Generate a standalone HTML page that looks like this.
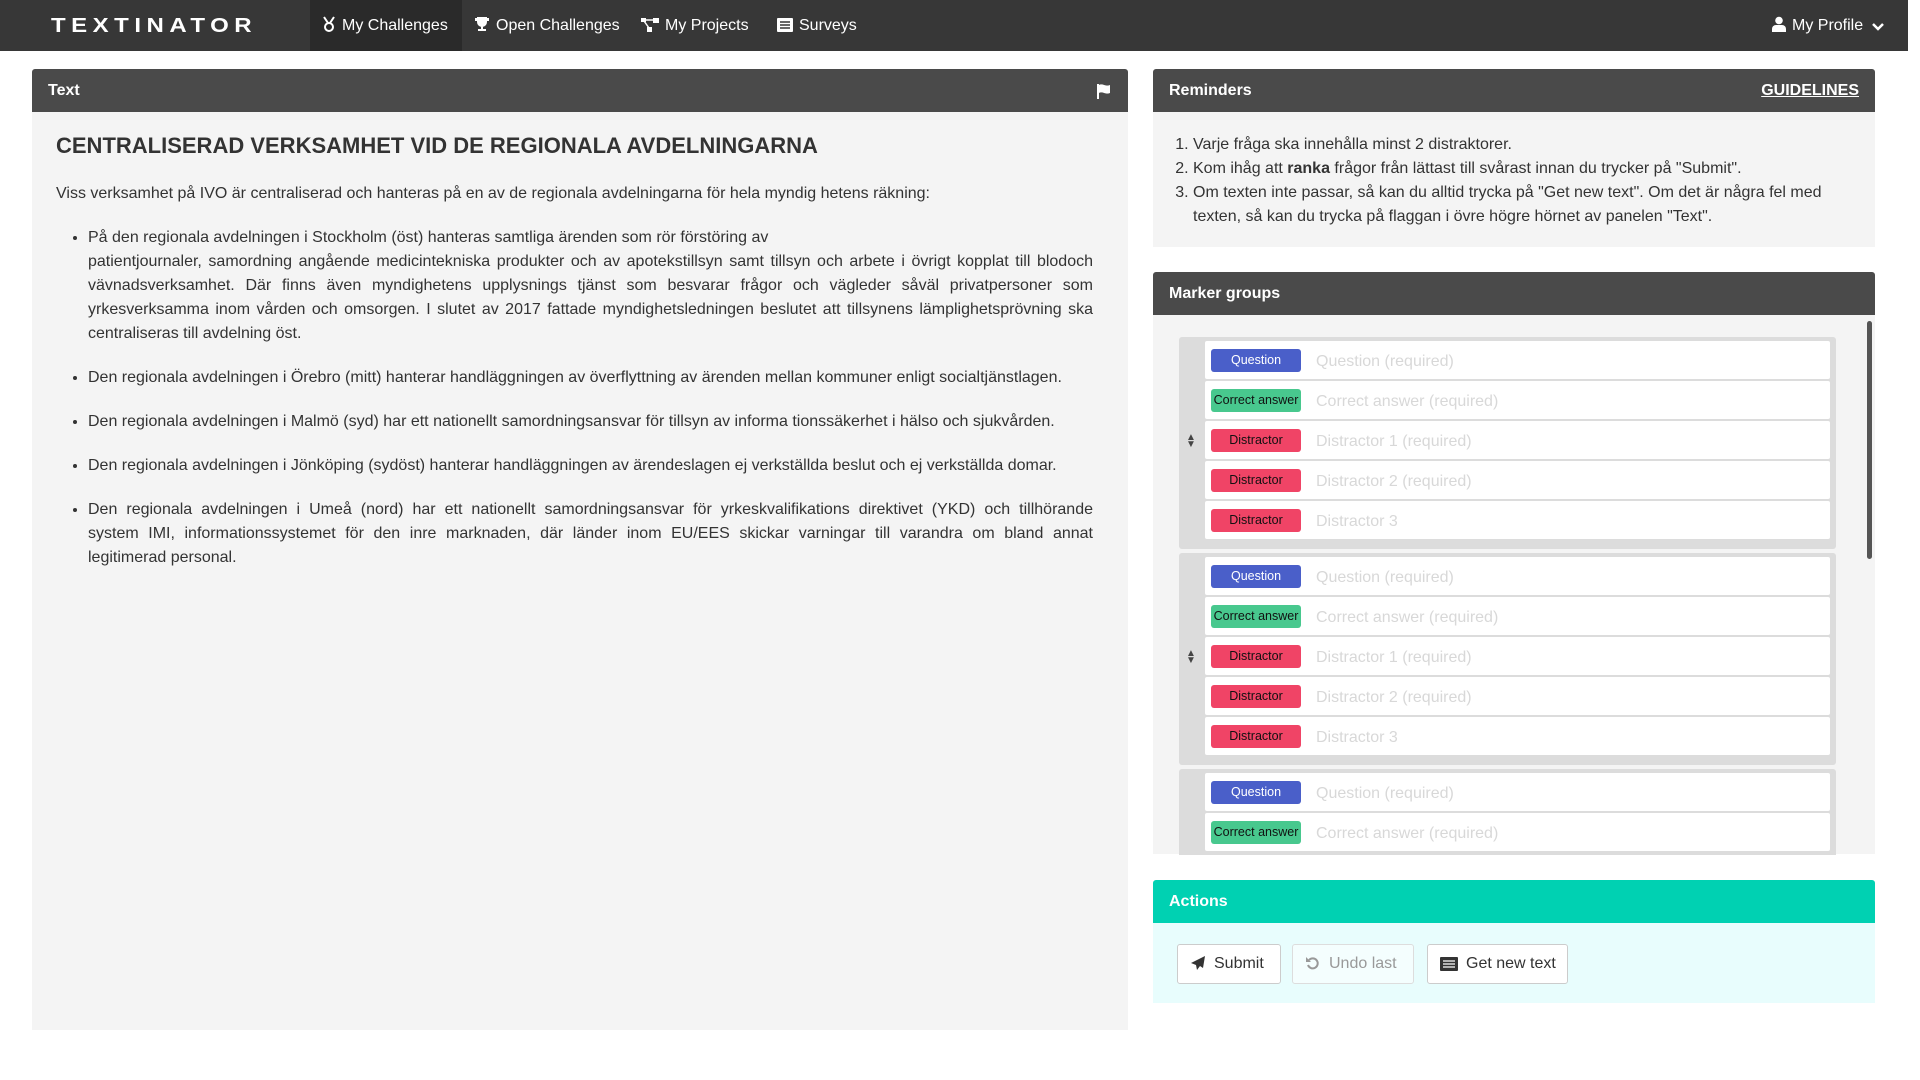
<!DOCTYPE html>
<html><head><meta charset="utf-8">
<style>
*{box-sizing:border-box;margin:0;padding:0}
body{width:1920px;height:1080px;background:#fff;font-family:"Liberation Sans",sans-serif;color:#333;position:relative;overflow:hidden}
.nav{position:absolute;left:0;top:0;width:1908px;height:51px;background:#373737;color:#fff}
.logo{position:absolute;left:51px;top:12px;font-size:24px;font-weight:bold;letter-spacing:5.5px;color:#fff;transform:scaleY(0.85)}
.ni{position:absolute;top:0;height:51px;line-height:52px;font-size:16px;color:#fff;padding:0 12px}
.ni svg{vertical-align:-2px;margin-right:6px}
.panel{position:absolute}
.ph{height:43px;background:#4a4a4a;color:#fff;font-weight:bold;font-size:16px;line-height:44px;padding:0 16px;border-radius:3px 3px 0 0;position:relative}
.pb{background:#f4f4f4}
h1{font-size:22px;font-weight:bold;color:#333;margin:0}
.txt{font-size:16px;line-height:24px;color:#333}
ul{margin:0;padding-left:32px}
li{text-align:justify;margin-bottom:20px}
.jl{display:block;text-align:justify;text-align-last:justify}
ol{padding-left:40px;font-size:16px;line-height:24px;color:#333}
.grp{position:absolute;left:1179px;width:657px;background:#dcdcdc;border-radius:3px;padding:4px 6px 4px 26px}
.row{height:38px;background:#fff;margin-bottom:2px;position:relative;border-radius:2px}
.bd{position:absolute;left:6px;top:8px;width:90px;height:23px;border-radius:3px;font-size:12.5px;line-height:23px;text-align:center}
.q{background:#4a5fc9;color:#fff}.c{background:#48c88e;color:#111}.d{background:#f04466;color:#111}
.pl{position:absolute;left:111px;top:1px;line-height:40px;font-size:16px;color:#d8d8d8}
.sort{position:absolute;left:7px;color:#444;font-size:10px;line-height:7px}
.btn{position:absolute;top:944px;height:40px;border:1px solid #ccc;border-radius:3px;background:#fff;font-size:16px;line-height:38px;color:#333;padding-left:12px}
.btn svg{vertical-align:-3px;margin-right:8px}
</style></head><body>
<div class="nav">
<div class="logo">TEXTINATOR</div>
<div class="ni" style="left:310px;width:152px;background:#2a2a2a"><svg width="14" height="16" viewBox="0 0 14 16"><path d="M2 1l4 6M12 1l-4 6" stroke="#fff" stroke-width="2"/><circle cx="7" cy="11" r="4" fill="none" stroke="#fff" stroke-width="2"/></svg>My Challenges</div>
<div class="ni" style="left:462px"><svg width="16" height="16" viewBox="0 0 16 16"><path d="M3 1h10v5a5 5 0 0 1-10 0zM1 2h2v3H1zM13 2h2v3h-2zM7 10h2v3h3v2H4v-2h3z" fill="#fff"/></svg>Open Challenges</div>
<div class="ni" style="left:629px"><svg width="18" height="14" viewBox="0 0 18 14"><rect x="0" y="0" width="5" height="4" fill="#fff"/><rect x="12" y="0" width="6" height="5" fill="#fff"/><rect x="6" y="9" width="5" height="5" fill="#fff"/><path d="M3 3l5 7M5 2h8" stroke="#fff" stroke-width="1.5"/></svg>My Projects</div>
<div class="ni" style="left:765px"><svg width="16" height="14" viewBox="0 0 16 14"><rect x="0" y="0" width="16" height="14" rx="1" fill="#fff"/><path d="M3 4h10M3 7h10M3 10h10" stroke="#373737" stroke-width="1.5"/></svg>Surveys</div>
<div class="ni" style="left:1760px"><svg width="14" height="16" viewBox="0 0 14 16"><circle cx="7" cy="4.5" r="3.8" fill="#fff"/><path d="M0 16v-3a4 4 0 0 1 4-4h6a4 4 0 0 1 4 4v3z" fill="#fff"/></svg>My Profile <svg width="12" height="10" viewBox="0 0 12 10" style="margin-left:4px"><path d="M1 2l5 5 5-5" stroke="#fff" stroke-width="2.5" fill="none"/></svg></div>
</div>

<div class="panel" style="left:32px;top:69px;width:1096px">
<div class="ph">Text<svg style="position:absolute;right:16px;top:14px" width="16" height="16" viewBox="0 0 16 16"><path d="M2 1v15" stroke="#fff" stroke-width="2"/><path d="M3 2c4-2 6 2 11 0v8c-5 2-7-2-11 0z" fill="#fff"/></svg></div>
<div class="pb txt" style="height:918px;padding:22px 35px 0 24px">
<h1>CENTRALISERAD VERKSAMHET VID DE REGIONALA AVDELNINGARNA</h1>
<p style="margin:24px 0 20px">Viss verksamhet på IVO är centraliserad och hanteras på en av de regionala avdelningarna för hela myndig hetens räkning:</p>
<ul>
<li>På den regionala avdelningen i Stockholm (öst) hanteras samtliga ärenden som rör förstöring av<br>patientjournaler, samordning angående medicintekniska produkter och av apotekstillsyn samt tillsyn och arbete i övrigt kopplat till blodoch vävnadsverksamhet. Där finns även myndighetens upplysnings tjänst som besvarar frågor och vägleder såväl privatpersoner som yrkesverksamma inom vården och omsorgen. I slutet av 2017 fattade myndighetsledningen beslutet att tillsynens lämplighetsprövning ska centraliseras till avdelning öst.</li>
<li>Den regionala avdelningen i Örebro (mitt) hanterar handläggningen av överflyttning av ärenden mellan kommuner enligt socialtjänstlagen.</li>
<li>Den regionala avdelningen i Malmö (syd) har ett nationellt samordningsansvar för tillsyn av informa tionssäkerhet i hälso och sjukvården.</li>
<li>Den regionala avdelningen i Jönköping (sydöst) hanterar handläggningen av ärendeslagen ej verkställda beslut och ej verkställda domar.</li>
<li><span class="jl">Den regionala avdelningen i Umeå (nord) har ett nationellt samordningsansvar för yrkeskvalifikations direktivet (YKD) och tillhörande</span><span class="jl">system IMI, informationssystemet för den inre marknaden, där länder inom EU/EES skickar varningar till varandra om bland annat</span>legitimerad personal.</li>
</ul>
</div></div>

<div class="panel" style="left:1153px;top:69px;width:722px">
<div class="ph">Reminders<span style="position:absolute;right:16px;text-decoration:underline">GUIDELINES</span></div>
<div class="pb" style="height:135px;padding:21px 20px 0 0">
<ol><li style="margin:0;text-align:left">Varje fråga ska innehålla minst 2 distraktorer.</li>
<li style="margin:0;text-align:left">Kom ihåg att <b>ranka</b> frågor från lättast till svårast innan du trycker på "Submit".</li>
<li style="margin:0;text-align:left">Om texten inte passar, så kan du alltid trycka på "Get new text". Om det är några fel med<br>texten, så kan du trycka på flaggan i övre högre hörnet av panelen "Text".</li></ol>
</div></div>

<div class="panel" style="left:1153px;top:272px;width:722px">
<div class="ph">Marker groups</div>
<div class="pb" style="height:539px"></div></div>
<div style="position:absolute;left:1867px;top:321px;width:5px;height:238px;background:#555;border-radius:3px"></div>

<div class="grp" style="top:337px;height:212px"><div class="sort" style="top:97px">▲<br>▼</div>
<div class="row"><div class="bd q">Question</div><div class="pl">Question (required)</div></div>
<div class="row"><div class="bd c">Correct answer</div><div class="pl">Correct answer (required)</div></div>
<div class="row"><div class="bd d">Distractor</div><div class="pl">Distractor 1 (required)</div></div>
<div class="row"><div class="bd d">Distractor</div><div class="pl">Distractor 2 (required)</div></div>
<div class="row"><div class="bd d">Distractor</div><div class="pl">Distractor 3</div></div></div>
<div class="grp" style="top:553px;height:212px"><div class="sort" style="top:97px">▲<br>▼</div>
<div class="row"><div class="bd q">Question</div><div class="pl">Question (required)</div></div>
<div class="row"><div class="bd c">Correct answer</div><div class="pl">Correct answer (required)</div></div>
<div class="row"><div class="bd d">Distractor</div><div class="pl">Distractor 1 (required)</div></div>
<div class="row"><div class="bd d">Distractor</div><div class="pl">Distractor 2 (required)</div></div>
<div class="row"><div class="bd d">Distractor</div><div class="pl">Distractor 3</div></div></div>
<div class="grp" style="top:769px;height:86px;border-radius:3px 3px 0 0">
<div class="row"><div class="bd q">Question</div><div class="pl">Question (required)</div></div>
<div class="row"><div class="bd c">Correct answer</div><div class="pl">Correct answer (required)</div></div></div>

<div class="panel" style="left:1153px;top:880px;width:722px">
<div class="ph" style="background:#00d1b2">Actions</div>
<div style="height:80px;background:#e8fdfd"></div></div>
<div class="btn" style="left:1177px;width:104px"><svg width="16" height="16" viewBox="0 0 16 16"><path d="M15 1L1 8l5 2 1 5 3-4 3 2z" fill="#333"/></svg>Submit</div>
<div class="btn" style="left:1292px;width:122px;background:#f4fefe;border-color:#ddd;color:#999"><svg width="16" height="16" viewBox="0 0 16 16"><path d="M4 5a5 5 0 1 1-1 5" stroke="#999" stroke-width="2" fill="none"/><path d="M1 2v5h5z" fill="#999"/></svg>Undo last</div>
<div class="btn" style="left:1427px;width:141px"><svg width="18" height="14" viewBox="0 0 18 14"><rect width="18" height="14" rx="1" fill="#333"/><path d="M3 4h12M3 7h12M3 10h12" stroke="#fff" stroke-width="1.3"/></svg>Get new text</div>
</body></html>
